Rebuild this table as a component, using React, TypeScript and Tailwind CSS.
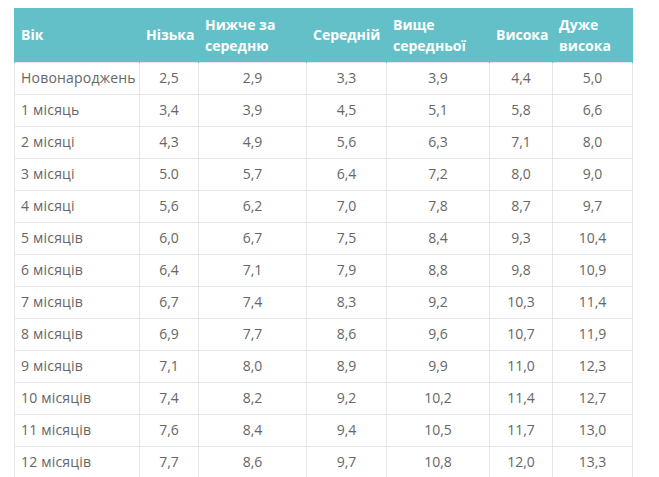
const HEADERS = [
  'Вік',
  'Нізька',
  'Нижче за середню',
  'Середній',
  'Вище середньої',
  'Висока',
  'Дуже висока',
]

const WIDTHS = ['w-[125px]', 'w-[59px]', 'w-[108px]', 'w-[80px]', 'w-[103px]', 'w-[63px]', 'w-[80px]']

const ROWS: string[][] = [
  ['Новонароджень', '2,5', '2,9', '3,3', '3,9', '4,4', '5,0'],
  ['1 місяць', '3,4', '3,9', '4,5', '5,1', '5,8', '6,6'],
  ['2 місяці', '4,3', '4,9', '5,6', '6,3', '7,1', '8,0'],
  ['3 місяці', '5.0', '5,7', '6,4', '7,2', '8,0', '9,0'],
  ['4 місяці', '5,6', '6,2', '7,0', '7,8', '8,7', '9,7'],
  ['5 місяців', '6,0', '6,7', '7,5', '8,4', '9,3', '10,4'],
  ['6 місяців', '6,4', '7,1', '7,9', '8,8', '9,8', '10,9'],
  ['7 місяців', '6,7', '7,4', '8,3', '9,2', '10,3', '11,4'],
  ['8 місяців', '6,9', '7,7', '8,6', '9,6', '10,7', '11,9'],
  ['9 місяців', '7,1', '8,0', '8,9', '9,9', '11,0', '12,3'],
  ['10 місяців', '7,4', '8,2', '9,2', '10,2', '11,4', '12,7'],
  ['11 місяців', '7,6', '8,4', '9,4', '10,5', '11,7', '13,0'],
  ['12 місяців', '7,7', '8,6', '9,7', '10,8', '12,0', '13,3'],
]

export default function App() {
  return (
    <div className="min-h-screen bg-white pt-2 pl-[14px] font-['Open_Sans',sans-serif]">
      <table className="table-fixed border-collapse w-[619px]">
        <thead>
          <tr className="bg-[#64c0c8] h-[54px]">
            {HEADERS.map((h, i) => (
              <th
                key={h}
                className={`${WIDTHS[i]} px-[6px] text-left align-middle text-[14px] leading-[21px] font-bold text-white border-x border-[#64c0c8]`}
              >
                {h}
              </th>
            ))}
          </tr>
        </thead>
        <tbody>
          {ROWS.map((row) => (
            <tr key={row[0]} className="h-[32px]">
              {row.map((cell, i) => (
                <td
                  key={i}
                  className={`border border-[#e6e6e6] text-[14px] text-[#666666] align-middle pb-[2px] ${
                    i === 0 ? 'text-left pl-[6px] whitespace-nowrap tracking-[0.2px]' : 'text-center'
                  }`}
                >
                  {cell}
                </td>
              ))}
            </tr>
          ))}
        </tbody>
      </table>
    </div>
  )
}
